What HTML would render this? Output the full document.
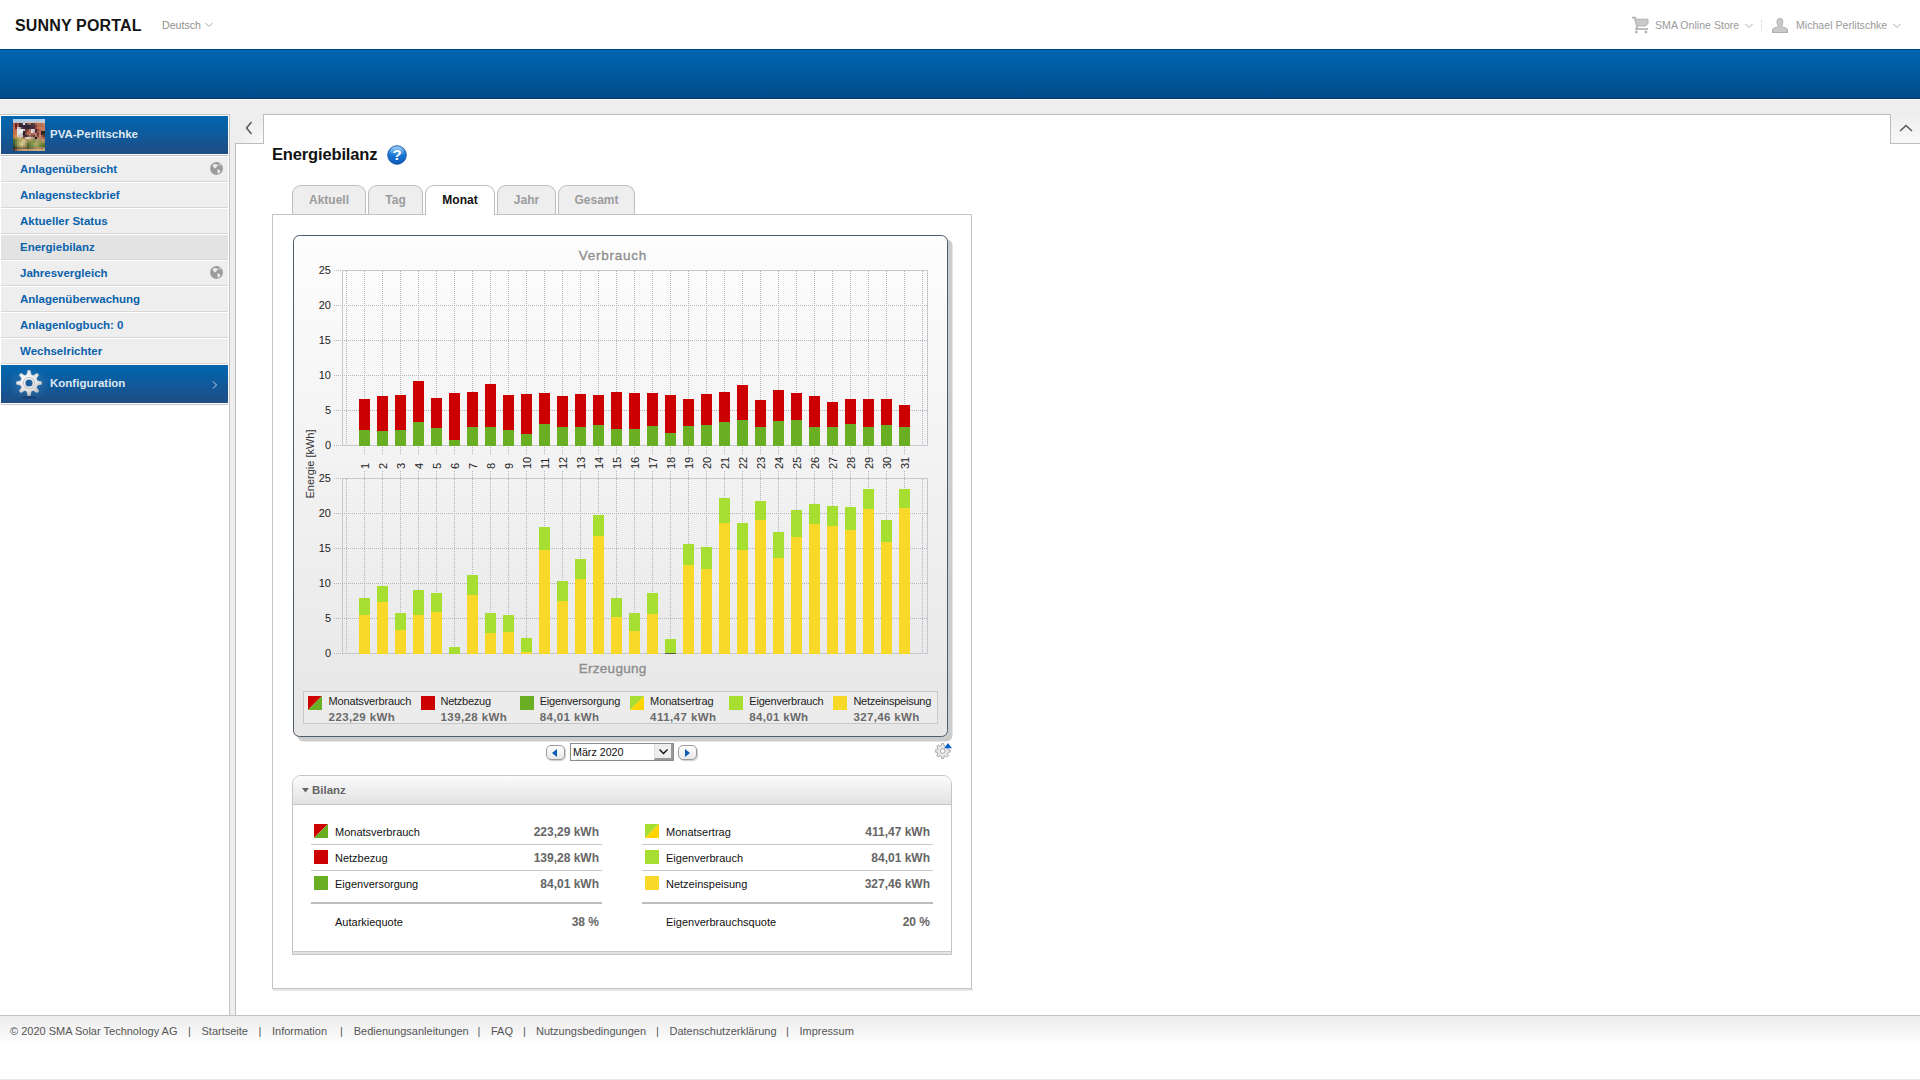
<!DOCTYPE html>
<html><head><meta charset="utf-8">
<style>
html,body{margin:0;padding:0;}
body{width:1920px;height:1080px;position:relative;overflow:hidden;background:#fff;font-family:"Liberation Sans", sans-serif;}
div,span{box-sizing:border-box;}
.abs{position:absolute;}
.mi{position:absolute;left:20px;font-size:11.5px;font-weight:bold;color:#0a62ab;line-height:14px;white-space:nowrap;}
.tab{position:absolute;top:185px;height:29px;border:1px solid #bdbdbd;border-bottom:none;border-radius:9px 9px 0 0;background:#eeeeee;font-size:12px;font-weight:bold;color:#9c9c9c;text-align:center;line-height:29px;}
.bt{position:absolute;font-size:11px;color:#111;line-height:14px;white-space:nowrap;}
.bv{position:absolute;width:150px;text-align:right;font-size:12px;font-weight:bold;color:#666;line-height:14px;white-space:nowrap;}
.ft{position:absolute;top:1024px;font-size:11px;color:#555;line-height:14px;white-space:nowrap;}
</style></head><body>
<!-- header -->
<div class="abs" style="left:15px;top:16px;font-size:16px;font-weight:bold;color:#151515;line-height:20px;letter-spacing:0.15px">SUNNY PORTAL</div>
<div class="abs" style="left:162px;top:18px;font-size:10.6px;color:#8f8f8f;line-height:14px">Deutsch</div>
<svg class="abs" style="left:205px;top:22px" width="8" height="6"><path d="M0.5 1 L4 4.5 L7.5 1" fill="none" stroke="#aaa" stroke-width="1"/></svg>
<!-- cart -->
<svg class="abs" style="left:1632px;top:16px" width="18" height="18" viewBox="0 0 18 18"><path d="M0 1.6 H3 L5.2 11.5 L3.8 13" fill="none" stroke="#b0b0b0" stroke-width="1.6"/><path d="M2.6 3.2 H16 V7.5 L13.6 10 H5 Z" fill="#c9c9c9" stroke="#b3b3b3" stroke-width="1"/><rect x="3.2" y="12.2" width="12.8" height="1.7" fill="#b3b3b3"/><circle cx="4.4" cy="16.1" r="1.3" fill="#aaa"/><circle cx="13.9" cy="16.1" r="1.3" fill="#aaa"/></svg>
<div class="abs" style="left:1655px;top:18px;font-size:10.6px;color:#9a9a9a;line-height:14px">SMA Online Store</div>
<svg class="abs" style="left:1745px;top:23px" width="8" height="6"><path d="M0.5 1 L4 4.5 L7.5 1" fill="none" stroke="#aaa" stroke-width="1"/></svg>
<div class="abs" style="left:1761px;top:20px;width:1px;height:11px;border-left:1px dotted #ccc"></div>
<svg class="abs" style="left:1772px;top:18px" width="16" height="15" viewBox="0 0 16 15"><path d="M0.5 14.5 V11.6 Q0.7 10.4 2.5 9.9 L4.5 9.4 Q6 8.9 6.3 8.1 Q5.1 7 5.1 4.6 V2.6 Q5.3 0.5 7.9 0.5 Q10.6 0.5 10.7 2.6 V4.6 Q10.7 7 9.6 8.1 Q9.9 8.9 11.5 9.4 L13.5 9.9 Q15.3 10.4 15.5 11.6 V14.5 Z" fill="#c9c9c9" stroke="#a8a8a8" stroke-width="0.9"/></svg>
<div class="abs" style="left:1796px;top:18px;font-size:10.6px;color:#9a9a9a;line-height:14px">Michael Perlitschke</div>
<svg class="abs" style="left:1893px;top:23px" width="8" height="6"><path d="M0.5 1 L4 4.5 L7.5 1" fill="none" stroke="#aaa" stroke-width="1"/></svg>

<!-- blue band -->
<div class="abs" style="left:0;top:49px;width:1920px;height:50px;background:linear-gradient(#0065af,#005a9f 45%,#004b88 100%);border-top:1px solid #00427c;border-bottom:1px solid #003a6e"></div>
<!-- gray page bg -->
<div class="abs" style="left:0;top:100px;width:1920px;height:915px;background:#eeeeee"></div>

<!-- sidebar -->
<div class="abs" style="left:0;top:114px;width:230px;height:901px;background:#fff;border-top:1px solid #c4c4c4;border-right:1px solid #c4c4c4"></div>
<div class="abs" style="left:1px;top:116px;width:227px;height:38px;background:linear-gradient(#0066b0,#1f4d85)"></div>
<!-- thumbnail -->
<svg class="abs" style="left:13px;top:119px" width="32" height="32" viewBox="0 0 32 32"><defs><filter id="tb" x="0" y="0" width="1" height="1"><feGaussianBlur stdDeviation="0.6"/></filter><clipPath id="tc"><rect width="32" height="32"/></clipPath></defs><g clip-path="url(#tc)"><rect width="32" height="32" fill="#9a7050"/><g filter="url(#tb)" shape-rendering="crispEdges"><rect x="0" y="0" width="2" height="2" fill="#a8d0f0"/><rect x="2" y="0" width="2" height="2" fill="#a8d0f0"/><rect x="4" y="0" width="2" height="2" fill="#a8d0f0"/><rect x="6" y="0" width="2" height="2" fill="#a8d0f0"/><rect x="8" y="0" width="2" height="2" fill="#a8d0f0"/><rect x="10" y="0" width="2" height="2" fill="#b0d4f0"/><rect x="12" y="0" width="2" height="2" fill="#b0d4f0"/><rect x="14" y="0" width="2" height="2" fill="#b0d4f0"/><rect x="16" y="0" width="2" height="2" fill="#a8d0f0"/><rect x="18" y="0" width="2" height="2" fill="#a8d0f0"/><rect x="20" y="0" width="2" height="2" fill="#a8d0f0"/><rect x="22" y="0" width="2" height="2" fill="#a8d0f0"/><rect x="24" y="0" width="2" height="2" fill="#a8d0f0"/><rect x="26" y="0" width="2" height="2" fill="#a8d0f0"/><rect x="28" y="0" width="2" height="2" fill="#b0d4f0"/><rect x="30" y="0" width="2" height="2" fill="#b0d4f0"/><rect x="0" y="2" width="2" height="2" fill="#c0c8d0"/><rect x="2" y="2" width="2" height="2" fill="#b8c0c8"/><rect x="4" y="2" width="2" height="2" fill="#c0c8d0"/><rect x="6" y="2" width="2" height="2" fill="#c0c0c8"/><rect x="8" y="2" width="2" height="2" fill="#c8c8d0"/><rect x="10" y="2" width="2" height="2" fill="#c0c0c8"/><rect x="12" y="2" width="2" height="2" fill="#c8c8d0"/><rect x="14" y="2" width="2" height="2" fill="#c8c8d0"/><rect x="16" y="2" width="2" height="2" fill="#c8c8d0"/><rect x="18" y="2" width="2" height="2" fill="#c0c8d0"/><rect x="20" y="2" width="2" height="2" fill="#c8c0c0"/><rect x="22" y="2" width="2" height="2" fill="#c8c0c0"/><rect x="24" y="2" width="2" height="2" fill="#c8c0c0"/><rect x="26" y="2" width="2" height="2" fill="#c8c8c8"/><rect x="28" y="2" width="2" height="2" fill="#c8c8c8"/><rect x="30" y="2" width="2" height="2" fill="#c8c8c8"/><rect x="0" y="4" width="2" height="2" fill="#c06040"/><rect x="2" y="4" width="2" height="2" fill="#5a3030"/><rect x="4" y="4" width="2" height="2" fill="#a05040"/><rect x="6" y="4" width="2" height="2" fill="#302830"/><rect x="8" y="4" width="2" height="2" fill="#404048"/><rect x="10" y="4" width="2" height="2" fill="#e0e0e8"/><rect x="12" y="4" width="2" height="2" fill="#503838"/><rect x="14" y="4" width="2" height="2" fill="#805048"/><rect x="16" y="4" width="2" height="2" fill="#a06050"/><rect x="18" y="4" width="2" height="2" fill="#503838"/><rect x="20" y="4" width="2" height="2" fill="#604040"/><rect x="22" y="4" width="2" height="2" fill="#a06048"/><rect x="24" y="4" width="2" height="2" fill="#c07050"/><rect x="26" y="4" width="2" height="2" fill="#c07050"/><rect x="28" y="4" width="2" height="2" fill="#c07858"/><rect x="30" y="4" width="2" height="2" fill="#c88060"/><rect x="0" y="6" width="2" height="2" fill="#c06040"/><rect x="2" y="6" width="2" height="2" fill="#5a2828"/><rect x="4" y="6" width="2" height="2" fill="#b85a40"/><rect x="6" y="6" width="2" height="2" fill="#302028"/><rect x="8" y="6" width="2" height="2" fill="#302030"/><rect x="10" y="6" width="2" height="2" fill="#302838"/><rect x="12" y="6" width="2" height="2" fill="#302838"/><rect x="14" y="6" width="2" height="2" fill="#202840"/><rect x="16" y="6" width="2" height="2" fill="#303040"/><rect x="18" y="6" width="2" height="2" fill="#403038"/><rect x="20" y="6" width="2" height="2" fill="#503838"/><rect x="22" y="6" width="2" height="2" fill="#704040"/><rect x="24" y="6" width="2" height="2" fill="#c07050"/><rect x="26" y="6" width="2" height="2" fill="#b07050"/><rect x="28" y="6" width="2" height="2" fill="#a07060"/><rect x="30" y="6" width="2" height="2" fill="#c08060"/><rect x="0" y="8" width="2" height="2" fill="#c86848"/><rect x="2" y="8" width="2" height="2" fill="#6a3030"/><rect x="4" y="8" width="2" height="2" fill="#d0c8c8"/><rect x="6" y="8" width="2" height="2" fill="#b8b0b0"/><rect x="8" y="8" width="2" height="2" fill="#503848"/><rect x="10" y="8" width="2" height="2" fill="#402838"/><rect x="12" y="8" width="2" height="2" fill="#302030"/><rect x="14" y="8" width="2" height="2" fill="#302838"/><rect x="16" y="8" width="2" height="2" fill="#402838"/><rect x="18" y="8" width="2" height="2" fill="#503040"/><rect x="20" y="8" width="2" height="2" fill="#402830"/><rect x="22" y="8" width="2" height="2" fill="#a05040"/><rect x="24" y="8" width="2" height="2" fill="#c87050"/><rect x="26" y="8" width="2" height="2" fill="#c87858"/><rect x="28" y="8" width="2" height="2" fill="#d08060"/><rect x="30" y="8" width="2" height="2" fill="#c87858"/><rect x="0" y="10" width="2" height="2" fill="#c86840"/><rect x="2" y="10" width="2" height="2" fill="#c06848"/><rect x="4" y="10" width="2" height="2" fill="#e8e8e8"/><rect x="6" y="10" width="2" height="2" fill="#e0e0e0"/><rect x="8" y="10" width="2" height="2" fill="#f0f0f0"/><rect x="10" y="10" width="2" height="2" fill="#d0c8c8"/><rect x="12" y="10" width="2" height="2" fill="#603830"/><rect x="14" y="10" width="2" height="2" fill="#804838"/><rect x="16" y="10" width="2" height="2" fill="#b07060"/><rect x="18" y="10" width="2" height="2" fill="#d8d0d0"/><rect x="20" y="10" width="2" height="2" fill="#d0c0c0"/><rect x="22" y="10" width="2" height="2" fill="#402830"/><rect x="24" y="10" width="2" height="2" fill="#904838"/><rect x="26" y="10" width="2" height="2" fill="#b06050"/><rect x="28" y="10" width="2" height="2" fill="#c07858"/><rect x="30" y="10" width="2" height="2" fill="#c08060"/><rect x="0" y="12" width="2" height="2" fill="#c86840"/><rect x="2" y="12" width="2" height="2" fill="#c87050"/><rect x="4" y="12" width="2" height="2" fill="#e0e0e8"/><rect x="6" y="12" width="2" height="2" fill="#f0f0f0"/><rect x="8" y="12" width="2" height="2" fill="#e8e8e8"/><rect x="10" y="12" width="2" height="2" fill="#302030"/><rect x="12" y="12" width="2" height="2" fill="#704038"/><rect x="14" y="12" width="2" height="2" fill="#a06048"/><rect x="16" y="12" width="2" height="2" fill="#c07058"/><rect x="18" y="12" width="2" height="2" fill="#e8e0e0"/><rect x="20" y="12" width="2" height="2" fill="#c0a0a0"/><rect x="22" y="12" width="2" height="2" fill="#503030"/><rect x="24" y="12" width="2" height="2" fill="#a05848"/><rect x="26" y="12" width="2" height="2" fill="#c07060"/><rect x="28" y="12" width="2" height="2" fill="#302020"/><rect x="30" y="12" width="2" height="2" fill="#202820"/><rect x="0" y="14" width="2" height="2" fill="#c07040"/><rect x="2" y="14" width="2" height="2" fill="#d08050"/><rect x="4" y="14" width="2" height="2" fill="#e0e0e0"/><rect x="6" y="14" width="2" height="2" fill="#d8d8e0"/><rect x="8" y="14" width="2" height="2" fill="#c0b8c0"/><rect x="10" y="14" width="2" height="2" fill="#201828"/><rect x="12" y="14" width="2" height="2" fill="#905040"/><rect x="14" y="14" width="2" height="2" fill="#b07058"/><rect x="16" y="14" width="2" height="2" fill="#c87860"/><rect x="18" y="14" width="2" height="2" fill="#a06050"/><rect x="20" y="14" width="2" height="2" fill="#b07060"/><rect x="22" y="14" width="2" height="2" fill="#c08070"/><rect x="24" y="14" width="2" height="2" fill="#603030"/><rect x="26" y="14" width="2" height="2" fill="#c07860"/><rect x="28" y="14" width="2" height="2" fill="#402020"/><rect x="30" y="14" width="2" height="2" fill="#304028"/><rect x="0" y="16" width="2" height="2" fill="#d07840"/><rect x="2" y="16" width="2" height="2" fill="#d88850"/><rect x="4" y="16" width="2" height="2" fill="#d8c8b0"/><rect x="6" y="16" width="2" height="2" fill="#c8c0c0"/><rect x="8" y="16" width="2" height="2" fill="#d0c8c8"/><rect x="10" y="16" width="2" height="2" fill="#503038"/><rect x="12" y="16" width="2" height="2" fill="#402830"/><rect x="14" y="16" width="2" height="2" fill="#705050"/><rect x="16" y="16" width="2" height="2" fill="#907060"/><rect x="18" y="16" width="2" height="2" fill="#805848"/><rect x="20" y="16" width="2" height="2" fill="#604038"/><rect x="22" y="16" width="2" height="2" fill="#b07060"/><rect x="24" y="16" width="2" height="2" fill="#805040"/><rect x="26" y="16" width="2" height="2" fill="#c08070"/><rect x="28" y="16" width="2" height="2" fill="#a06050"/><rect x="30" y="16" width="2" height="2" fill="#603838"/><rect x="0" y="18" width="2" height="2" fill="#a08040"/><rect x="2" y="18" width="2" height="2" fill="#b09050"/><rect x="4" y="18" width="2" height="2" fill="#c0a060"/><rect x="6" y="18" width="2" height="2" fill="#d0b880"/><rect x="8" y="18" width="2" height="2" fill="#b09860"/><rect x="10" y="18" width="2" height="2" fill="#907050"/><rect x="12" y="18" width="2" height="2" fill="#c8b8a0"/><rect x="14" y="18" width="2" height="2" fill="#e0d8c8"/><rect x="16" y="18" width="2" height="2" fill="#d0c0b0"/><rect x="18" y="18" width="2" height="2" fill="#c0a890"/><rect x="20" y="18" width="2" height="2" fill="#a08870"/><rect x="22" y="18" width="2" height="2" fill="#201818"/><rect x="24" y="18" width="2" height="2" fill="#b08060"/><rect x="26" y="18" width="2" height="2" fill="#c08870"/><rect x="28" y="18" width="2" height="2" fill="#b07050"/><rect x="30" y="18" width="2" height="2" fill="#a06850"/><rect x="0" y="20" width="2" height="2" fill="#506838"/><rect x="2" y="20" width="2" height="2" fill="#708040"/><rect x="4" y="20" width="2" height="2" fill="#909850"/><rect x="6" y="20" width="2" height="2" fill="#a0a060"/><rect x="8" y="20" width="2" height="2" fill="#c0b070"/><rect x="10" y="20" width="2" height="2" fill="#d0b880"/><rect x="12" y="20" width="2" height="2" fill="#b0a070"/><rect x="14" y="20" width="2" height="2" fill="#a09060"/><rect x="16" y="20" width="2" height="2" fill="#c0a070"/><rect x="18" y="20" width="2" height="2" fill="#a09060"/><rect x="20" y="20" width="2" height="2" fill="#809050"/><rect x="22" y="20" width="2" height="2" fill="#a09868"/><rect x="24" y="20" width="2" height="2" fill="#b09870"/><rect x="26" y="20" width="2" height="2" fill="#a08860"/><rect x="28" y="20" width="2" height="2" fill="#c09068"/><rect x="30" y="20" width="2" height="2" fill="#c08868"/><rect x="0" y="22" width="2" height="2" fill="#406030"/><rect x="2" y="22" width="2" height="2" fill="#608040"/><rect x="4" y="22" width="2" height="2" fill="#a0a060"/><rect x="6" y="22" width="2" height="2" fill="#b0a868"/><rect x="8" y="22" width="2" height="2" fill="#c8c080"/><rect x="10" y="22" width="2" height="2" fill="#d0c090"/><rect x="12" y="22" width="2" height="2" fill="#b0a070"/><rect x="14" y="22" width="2" height="2" fill="#90904a"/><rect x="16" y="22" width="2" height="2" fill="#808840"/><rect x="18" y="22" width="2" height="2" fill="#909050"/><rect x="20" y="22" width="2" height="2" fill="#80904a"/><rect x="22" y="22" width="2" height="2" fill="#a0a060"/><rect x="24" y="22" width="2" height="2" fill="#a09860"/><rect x="26" y="22" width="2" height="2" fill="#909850"/><rect x="28" y="22" width="2" height="2" fill="#a09050"/><rect x="30" y="22" width="2" height="2" fill="#a09060"/><rect x="0" y="24" width="2" height="2" fill="#405830"/><rect x="2" y="24" width="2" height="2" fill="#708040"/><rect x="4" y="24" width="2" height="2" fill="#a09858"/><rect x="6" y="24" width="2" height="2" fill="#c0b880"/><rect x="8" y="24" width="2" height="2" fill="#d8d0a0"/><rect x="10" y="24" width="2" height="2" fill="#c0b080"/><rect x="12" y="24" width="2" height="2" fill="#a09060"/><rect x="14" y="24" width="2" height="2" fill="#606838"/><rect x="16" y="24" width="2" height="2" fill="#708040"/><rect x="18" y="24" width="2" height="2" fill="#809050"/><rect x="20" y="24" width="2" height="2" fill="#a0a060"/><rect x="22" y="24" width="2" height="2" fill="#b0a870"/><rect x="24" y="24" width="2" height="2" fill="#a0a060"/><rect x="26" y="24" width="2" height="2" fill="#809048"/><rect x="28" y="24" width="2" height="2" fill="#708838"/><rect x="30" y="24" width="2" height="2" fill="#608030"/><rect x="0" y="26" width="2" height="2" fill="#304828"/><rect x="2" y="26" width="2" height="2" fill="#607040"/><rect x="4" y="26" width="2" height="2" fill="#909050"/><rect x="6" y="26" width="2" height="2" fill="#b0a068"/><rect x="8" y="26" width="2" height="2" fill="#c0b078"/><rect x="10" y="26" width="2" height="2" fill="#b0a070"/><rect x="12" y="26" width="2" height="2" fill="#908858"/><rect x="14" y="26" width="2" height="2" fill="#506030"/><rect x="16" y="26" width="2" height="2" fill="#608038"/><rect x="18" y="26" width="2" height="2" fill="#708848"/><rect x="20" y="26" width="2" height="2" fill="#909858"/><rect x="22" y="26" width="2" height="2" fill="#a0a060"/><rect x="24" y="26" width="2" height="2" fill="#90984a"/><rect x="26" y="26" width="2" height="2" fill="#708838"/><rect x="28" y="26" width="2" height="2" fill="#607838"/><rect x="30" y="26" width="2" height="2" fill="#587030"/><rect x="0" y="28" width="2" height="2" fill="#403828"/><rect x="2" y="28" width="2" height="2" fill="#504030"/><rect x="4" y="28" width="2" height="2" fill="#706040"/><rect x="6" y="28" width="2" height="2" fill="#807048"/><rect x="8" y="28" width="2" height="2" fill="#907050"/><rect x="10" y="28" width="2" height="2" fill="#806848"/><rect x="12" y="28" width="2" height="2" fill="#706040"/><rect x="14" y="28" width="2" height="2" fill="#605838"/><rect x="16" y="28" width="2" height="2" fill="#706840"/><rect x="18" y="28" width="2" height="2" fill="#807048"/><rect x="20" y="28" width="2" height="2" fill="#908050"/><rect x="22" y="28" width="2" height="2" fill="#a08858"/><rect x="24" y="28" width="2" height="2" fill="#b09060"/><rect x="26" y="28" width="2" height="2" fill="#a08860"/><rect x="28" y="28" width="2" height="2" fill="#988058"/><rect x="30" y="28" width="2" height="2" fill="#a08860"/><rect x="0" y="30" width="2" height="2" fill="#503830"/><rect x="2" y="30" width="2" height="2" fill="#806048"/><rect x="4" y="30" width="2" height="2" fill="#a08060"/><rect x="6" y="30" width="2" height="2" fill="#b09068"/><rect x="8" y="30" width="2" height="2" fill="#c09870"/><rect x="10" y="30" width="2" height="2" fill="#c8a078"/><rect x="12" y="30" width="2" height="2" fill="#c0a070"/><rect x="14" y="30" width="2" height="2" fill="#b89868"/><rect x="16" y="30" width="2" height="2" fill="#c0a070"/><rect x="18" y="30" width="2" height="2" fill="#c8a878"/><rect x="20" y="30" width="2" height="2" fill="#c8a878"/><rect x="22" y="30" width="2" height="2" fill="#d0a878"/><rect x="24" y="30" width="2" height="2" fill="#d0b080"/><rect x="26" y="30" width="2" height="2" fill="#d0a878"/><rect x="28" y="30" width="2" height="2" fill="#c8a070"/><rect x="30" y="30" width="2" height="2" fill="#d0a878"/></g></g></svg>
<div class="abs" style="left:50px;top:127px;font-size:11.5px;font-weight:bold;color:#dfe8f2;line-height:14px">PVA-Perlitschke</div>
<div class="abs" style="left:1px;top:155px;width:227px;height:1px;background:#bdbdbd"></div>
<div style="position:absolute;left:1px;top:157px;width:227px;height:24px;background:#eeeeee"></div>
<div style="position:absolute;left:1px;top:181px;width:227px;height:1px;background:#d6d6d6"></div>
<div class="mi" style="top:162px">Anlagenübersicht</div>
<svg style="position:absolute;left:210px;top:162px" width="14" height="14" viewBox="0 0 14 14"><circle cx="6.5" cy="6.5" r="6.5" fill="#9c9c9c"/><path d="M2.6 3.2 L4.8 2 L7.6 2.4 L7.8 3.6 L5.2 6.6 L3.6 5.4 Z" fill="#ececec"/><path d="M9 1.8 L10.6 2.6 L10.2 3.6 L9 3.2 Z" fill="#ececec"/><path d="M7 8 L8.6 7.4 L10.4 8.8 L9.6 10.8 L7.8 12 L7.6 9.8 Z" fill="#ececec"/></svg>
<div style="position:absolute;left:1px;top:183px;width:227px;height:24px;background:#eeeeee"></div>
<div style="position:absolute;left:1px;top:207px;width:227px;height:1px;background:#d6d6d6"></div>
<div class="mi" style="top:188px">Anlagensteckbrief</div>
<div style="position:absolute;left:1px;top:209px;width:227px;height:24px;background:#eeeeee"></div>
<div style="position:absolute;left:1px;top:233px;width:227px;height:1px;background:#d6d6d6"></div>
<div class="mi" style="top:214px">Aktueller Status</div>
<div style="position:absolute;left:1px;top:235px;width:227px;height:24px;background:#e3e3e3"></div>
<div style="position:absolute;left:1px;top:259px;width:227px;height:1px;background:#d6d6d6"></div>
<div class="mi" style="top:240px">Energiebilanz</div>
<div style="position:absolute;left:1px;top:261px;width:227px;height:24px;background:#eeeeee"></div>
<div style="position:absolute;left:1px;top:285px;width:227px;height:1px;background:#d6d6d6"></div>
<div class="mi" style="top:266px">Jahresvergleich</div>
<svg style="position:absolute;left:210px;top:266px" width="14" height="14" viewBox="0 0 14 14"><circle cx="6.5" cy="6.5" r="6.5" fill="#9c9c9c"/><path d="M2.6 3.2 L4.8 2 L7.6 2.4 L7.8 3.6 L5.2 6.6 L3.6 5.4 Z" fill="#ececec"/><path d="M9 1.8 L10.6 2.6 L10.2 3.6 L9 3.2 Z" fill="#ececec"/><path d="M7 8 L8.6 7.4 L10.4 8.8 L9.6 10.8 L7.8 12 L7.6 9.8 Z" fill="#ececec"/></svg>
<div style="position:absolute;left:1px;top:287px;width:227px;height:24px;background:#eeeeee"></div>
<div style="position:absolute;left:1px;top:311px;width:227px;height:1px;background:#d6d6d6"></div>
<div class="mi" style="top:292px">Anlagenüberwachung</div>
<div style="position:absolute;left:1px;top:313px;width:227px;height:24px;background:#eeeeee"></div>
<div style="position:absolute;left:1px;top:337px;width:227px;height:1px;background:#d6d6d6"></div>
<div class="mi" style="top:318px">Anlagenlogbuch: 0</div>
<div style="position:absolute;left:1px;top:339px;width:227px;height:24px;background:#eeeeee"></div>
<div style="position:absolute;left:1px;top:363px;width:227px;height:1px;background:#d6d6d6"></div>
<div class="mi" style="top:344px">Wechselrichter</div>
<div class="abs" style="left:1px;top:365px;width:227px;height:38px;background:linear-gradient(#0066b0,#1f4d85)"></div>
<div class="abs" style="left:1px;top:404px;width:227px;height:1px;background:#c8c8c8"></div>
<div class="abs" style="left:6px;top:366px;width:46px;height:36px;background:radial-gradient(ellipse at 50% 50%,rgba(120,170,220,0.35) 0,rgba(120,170,220,0) 65%)"></div>
<svg class="abs" style="left:16px;top:370px" width="26" height="30" viewBox="0 0 26 30"><defs><radialGradient id="gg" cx="0.4" cy="0.35" r="0.7"><stop offset="0" stop-color="#ffffff"/><stop offset="0.6" stop-color="#e6e6e6"/><stop offset="1" stop-color="#bdbdbd"/></radialGradient></defs><ellipse cx="13" cy="27.5" rx="8" ry="1.6" fill="#0e2f5c" opacity="0.45"/><path d="M10.86 4.67 L11.81 0.46 L14.19 0.46 L15.14 4.67 L17.38 5.60 L21.03 3.29 L22.71 4.97 L20.40 8.62 L21.33 10.86 L25.54 11.81 L25.54 14.19 L21.33 15.14 L20.40 17.38 L22.71 21.03 L21.03 22.71 L17.38 20.40 L15.14 21.33 L14.19 25.54 L11.81 25.54 L10.86 21.33 L8.62 20.40 L4.97 22.71 L3.29 21.03 L5.60 17.38 L4.67 15.14 L0.46 14.19 L0.46 11.81 L4.67 10.86 L5.60 8.62 L3.29 4.97 L4.97 3.29 L8.62 5.60 Z" fill="url(#gg)" stroke="#d0d0d0" stroke-width="0.6" stroke-linejoin="round"/><circle cx="13" cy="13" r="5.6" fill="none" stroke="#c8c8c8" stroke-width="1.2"/><circle cx="13" cy="13" r="3.6" fill="#1b5c9e"/></svg>
<div class="abs" style="left:50px;top:376px;font-size:11.5px;font-weight:bold;color:#dfe8f2;line-height:14px">Konfiguration</div>
<svg class="abs" style="left:212px;top:381px" width="6" height="8"><path d="M1 0.5 L4.5 4 L1 7.5" fill="none" stroke="#c8d4e4" stroke-width="1"/></svg>

<!-- content frame -->
<div class="abs" style="left:235px;top:143px;width:1685px;height:872px;background:#fff;border-left:1px solid #bdbdbd;border-top:1px solid #bdbdbd"></div>
<div class="abs" style="left:263px;top:114px;width:1628px;height:30px;background:#fff;border-left:1px solid #bdbdbd;border-top:1px solid #bdbdbd;border-right:1px solid #bdbdbd"></div>
<div class="abs" style="left:264px;top:143px;width:1626px;height:1px;background:#fff"></div>
<div class="abs" style="left:236px;top:114px;width:27px;height:29px;background:radial-gradient(circle at 100% 100%,#fafafa 0,#eeeeee 60%)"></div>
<div class="abs" style="left:1891px;top:114px;width:29px;height:29px;background:linear-gradient(#eeeeee,#f8f8f8)"></div>
<svg class="abs" style="left:244px;top:121px" width="10" height="14"><path d="M7.5 1 L2.5 7 L7.5 13" fill="none" stroke="#555" stroke-width="1.5"/></svg>
<svg class="abs" style="left:1899px;top:123px" width="14" height="10"><path d="M1 8 L7 2.5 L13 8" fill="none" stroke="#555" stroke-width="1.5"/></svg>

<!-- title -->
<div class="abs" style="left:272px;top:144px;font-size:16.5px;font-weight:bold;color:#111;line-height:20px;letter-spacing:-0.15px">Energiebilanz</div>
<svg class="abs" style="left:387px;top:145px" width="20" height="20" viewBox="0 0 20 20"><defs><linearGradient id="hg" x1="0" y1="0" x2="0" y2="1"><stop offset="0" stop-color="#5fb0f0"/><stop offset="0.5" stop-color="#1a78d6"/><stop offset="1" stop-color="#0a58b8"/></linearGradient><linearGradient id="hh" x1="0" y1="0" x2="0" y2="1"><stop offset="0" stop-color="#fff" stop-opacity="0.4"/><stop offset="1" stop-color="#fff" stop-opacity="0"/></linearGradient></defs><circle cx="10" cy="10" r="9.3" fill="url(#hg)" stroke="#15549e" stroke-width="0.9"/><ellipse cx="10" cy="6.2" rx="6.8" ry="4.6" fill="url(#hh)"/><text x="10" y="15.4" font-size="15" font-weight="bold" fill="#fff" text-anchor="middle" font-family='"Liberation Sans", sans-serif'>?</text></svg>

<!-- tab content box -->
<div class="abs" style="left:272px;top:214px;width:700px;height:775px;border:1px solid #c4c4c4;background:#fff"></div>
<div class="abs" style="left:273px;top:989px;width:700px;height:2px;background:#e6e6e6"></div>
<div class="tab" style="left:292px;width:74px">Aktuell</div>
<div class="tab" style="left:368px;width:55px">Tag</div>
<div class="tab" style="left:425px;width:70px;height:30px;background:#fff;color:#111">Monat</div>
<div class="tab" style="left:497px;width:59px">Jahr</div>
<div class="tab" style="left:558px;width:77px">Gesamt</div>

<svg style="position:absolute;left:290px;top:230px" width="670" height="520" viewBox="290 230 670 520" font-family='"Liberation Sans", sans-serif'>
<defs><linearGradient id="cbg" x1="0" y1="0" x2="0" y2="1"><stop offset="0" stop-color="#fdfdfd"/><stop offset="1" stop-color="#e6e6e6"/></linearGradient></defs>
<rect x="297.5" y="239.5" width="655" height="502" rx="6" fill="#cccccc"/>
<rect x="293.5" y="235.5" width="654" height="501" rx="6" fill="url(#cbg)" stroke="#4d5b67" stroke-width="1"/>
<rect x="342.5" y="270.5" width="585" height="175" fill="none" stroke="#c3c9cf" stroke-width="1"/>
<line x1="334" y1="445.5" x2="342" y2="445.5" stroke="#b0b5ba" stroke-width="1" stroke-dasharray="1 1"/>
<line x1="334" y1="410.5" x2="927" y2="410.5" stroke="#b0b5ba" stroke-width="1" stroke-dasharray="1 1"/>
<line x1="334" y1="375.5" x2="927" y2="375.5" stroke="#b0b5ba" stroke-width="1" stroke-dasharray="1 1"/>
<line x1="334" y1="340.5" x2="927" y2="340.5" stroke="#b0b5ba" stroke-width="1" stroke-dasharray="1 1"/>
<line x1="334" y1="305.5" x2="927" y2="305.5" stroke="#b0b5ba" stroke-width="1" stroke-dasharray="1 1"/>
<line x1="334" y1="270.5" x2="342" y2="270.5" stroke="#b0b5ba" stroke-width="1" stroke-dasharray="1 1"/>
<line x1="346.5" y1="271" x2="346.5" y2="445" stroke="#b0b5ba" stroke-width="1" stroke-dasharray="1 1"/>
<line x1="364.5" y1="271" x2="364.5" y2="454" stroke="#b0b5ba" stroke-width="1" stroke-dasharray="1 1"/>
<line x1="382.5" y1="271" x2="382.5" y2="454" stroke="#b0b5ba" stroke-width="1" stroke-dasharray="1 1"/>
<line x1="400.5" y1="271" x2="400.5" y2="454" stroke="#b0b5ba" stroke-width="1" stroke-dasharray="1 1"/>
<line x1="418.5" y1="271" x2="418.5" y2="454" stroke="#b0b5ba" stroke-width="1" stroke-dasharray="1 1"/>
<line x1="436.5" y1="271" x2="436.5" y2="454" stroke="#b0b5ba" stroke-width="1" stroke-dasharray="1 1"/>
<line x1="454.5" y1="271" x2="454.5" y2="454" stroke="#b0b5ba" stroke-width="1" stroke-dasharray="1 1"/>
<line x1="472.5" y1="271" x2="472.5" y2="454" stroke="#b0b5ba" stroke-width="1" stroke-dasharray="1 1"/>
<line x1="490.5" y1="271" x2="490.5" y2="454" stroke="#b0b5ba" stroke-width="1" stroke-dasharray="1 1"/>
<line x1="508.5" y1="271" x2="508.5" y2="454" stroke="#b0b5ba" stroke-width="1" stroke-dasharray="1 1"/>
<line x1="526.5" y1="271" x2="526.5" y2="454" stroke="#b0b5ba" stroke-width="1" stroke-dasharray="1 1"/>
<line x1="544.5" y1="271" x2="544.5" y2="454" stroke="#b0b5ba" stroke-width="1" stroke-dasharray="1 1"/>
<line x1="562.5" y1="271" x2="562.5" y2="454" stroke="#b0b5ba" stroke-width="1" stroke-dasharray="1 1"/>
<line x1="580.5" y1="271" x2="580.5" y2="454" stroke="#b0b5ba" stroke-width="1" stroke-dasharray="1 1"/>
<line x1="598.5" y1="271" x2="598.5" y2="454" stroke="#b0b5ba" stroke-width="1" stroke-dasharray="1 1"/>
<line x1="616.5" y1="271" x2="616.5" y2="454" stroke="#b0b5ba" stroke-width="1" stroke-dasharray="1 1"/>
<line x1="634.5" y1="271" x2="634.5" y2="454" stroke="#b0b5ba" stroke-width="1" stroke-dasharray="1 1"/>
<line x1="652.5" y1="271" x2="652.5" y2="454" stroke="#b0b5ba" stroke-width="1" stroke-dasharray="1 1"/>
<line x1="670.5" y1="271" x2="670.5" y2="454" stroke="#b0b5ba" stroke-width="1" stroke-dasharray="1 1"/>
<line x1="688.5" y1="271" x2="688.5" y2="454" stroke="#b0b5ba" stroke-width="1" stroke-dasharray="1 1"/>
<line x1="706.5" y1="271" x2="706.5" y2="454" stroke="#b0b5ba" stroke-width="1" stroke-dasharray="1 1"/>
<line x1="724.5" y1="271" x2="724.5" y2="454" stroke="#b0b5ba" stroke-width="1" stroke-dasharray="1 1"/>
<line x1="742.5" y1="271" x2="742.5" y2="454" stroke="#b0b5ba" stroke-width="1" stroke-dasharray="1 1"/>
<line x1="760.5" y1="271" x2="760.5" y2="454" stroke="#b0b5ba" stroke-width="1" stroke-dasharray="1 1"/>
<line x1="778.5" y1="271" x2="778.5" y2="454" stroke="#b0b5ba" stroke-width="1" stroke-dasharray="1 1"/>
<line x1="796.5" y1="271" x2="796.5" y2="454" stroke="#b0b5ba" stroke-width="1" stroke-dasharray="1 1"/>
<line x1="814.5" y1="271" x2="814.5" y2="454" stroke="#b0b5ba" stroke-width="1" stroke-dasharray="1 1"/>
<line x1="832.5" y1="271" x2="832.5" y2="454" stroke="#b0b5ba" stroke-width="1" stroke-dasharray="1 1"/>
<line x1="850.5" y1="271" x2="850.5" y2="454" stroke="#b0b5ba" stroke-width="1" stroke-dasharray="1 1"/>
<line x1="868.5" y1="271" x2="868.5" y2="454" stroke="#b0b5ba" stroke-width="1" stroke-dasharray="1 1"/>
<line x1="886.5" y1="271" x2="886.5" y2="454" stroke="#b0b5ba" stroke-width="1" stroke-dasharray="1 1"/>
<line x1="904.5" y1="271" x2="904.5" y2="454" stroke="#b0b5ba" stroke-width="1" stroke-dasharray="1 1"/>
<line x1="922.5" y1="271" x2="922.5" y2="445" stroke="#b0b5ba" stroke-width="1" stroke-dasharray="1 1"/>
<text x="331" y="449" font-size="11" text-anchor="end" fill="#222">0</text>
<text x="331" y="414" font-size="11" text-anchor="end" fill="#222">5</text>
<text x="331" y="379" font-size="11" text-anchor="end" fill="#222">10</text>
<text x="331" y="344" font-size="11" text-anchor="end" fill="#222">15</text>
<text x="331" y="309" font-size="11" text-anchor="end" fill="#222">20</text>
<text x="331" y="274" font-size="11" text-anchor="end" fill="#222">25</text>
<rect x="342.5" y="478.5" width="585" height="175" fill="none" stroke="#c3c9cf" stroke-width="1"/>
<line x1="334" y1="653.5" x2="342" y2="653.5" stroke="#b0b5ba" stroke-width="1" stroke-dasharray="1 1"/>
<line x1="334" y1="618.5" x2="927" y2="618.5" stroke="#b0b5ba" stroke-width="1" stroke-dasharray="1 1"/>
<line x1="334" y1="583.5" x2="927" y2="583.5" stroke="#b0b5ba" stroke-width="1" stroke-dasharray="1 1"/>
<line x1="334" y1="548.5" x2="927" y2="548.5" stroke="#b0b5ba" stroke-width="1" stroke-dasharray="1 1"/>
<line x1="334" y1="513.5" x2="927" y2="513.5" stroke="#b0b5ba" stroke-width="1" stroke-dasharray="1 1"/>
<line x1="334" y1="478.5" x2="342" y2="478.5" stroke="#b0b5ba" stroke-width="1" stroke-dasharray="1 1"/>
<line x1="346.5" y1="479" x2="346.5" y2="653" stroke="#b0b5ba" stroke-width="1" stroke-dasharray="1 1"/>
<line x1="364.5" y1="471" x2="364.5" y2="653" stroke="#b0b5ba" stroke-width="1" stroke-dasharray="1 1"/>
<line x1="382.5" y1="471" x2="382.5" y2="653" stroke="#b0b5ba" stroke-width="1" stroke-dasharray="1 1"/>
<line x1="400.5" y1="471" x2="400.5" y2="653" stroke="#b0b5ba" stroke-width="1" stroke-dasharray="1 1"/>
<line x1="418.5" y1="471" x2="418.5" y2="653" stroke="#b0b5ba" stroke-width="1" stroke-dasharray="1 1"/>
<line x1="436.5" y1="471" x2="436.5" y2="653" stroke="#b0b5ba" stroke-width="1" stroke-dasharray="1 1"/>
<line x1="454.5" y1="471" x2="454.5" y2="653" stroke="#b0b5ba" stroke-width="1" stroke-dasharray="1 1"/>
<line x1="472.5" y1="471" x2="472.5" y2="653" stroke="#b0b5ba" stroke-width="1" stroke-dasharray="1 1"/>
<line x1="490.5" y1="471" x2="490.5" y2="653" stroke="#b0b5ba" stroke-width="1" stroke-dasharray="1 1"/>
<line x1="508.5" y1="471" x2="508.5" y2="653" stroke="#b0b5ba" stroke-width="1" stroke-dasharray="1 1"/>
<line x1="526.5" y1="471" x2="526.5" y2="653" stroke="#b0b5ba" stroke-width="1" stroke-dasharray="1 1"/>
<line x1="544.5" y1="471" x2="544.5" y2="653" stroke="#b0b5ba" stroke-width="1" stroke-dasharray="1 1"/>
<line x1="562.5" y1="471" x2="562.5" y2="653" stroke="#b0b5ba" stroke-width="1" stroke-dasharray="1 1"/>
<line x1="580.5" y1="471" x2="580.5" y2="653" stroke="#b0b5ba" stroke-width="1" stroke-dasharray="1 1"/>
<line x1="598.5" y1="471" x2="598.5" y2="653" stroke="#b0b5ba" stroke-width="1" stroke-dasharray="1 1"/>
<line x1="616.5" y1="471" x2="616.5" y2="653" stroke="#b0b5ba" stroke-width="1" stroke-dasharray="1 1"/>
<line x1="634.5" y1="471" x2="634.5" y2="653" stroke="#b0b5ba" stroke-width="1" stroke-dasharray="1 1"/>
<line x1="652.5" y1="471" x2="652.5" y2="653" stroke="#b0b5ba" stroke-width="1" stroke-dasharray="1 1"/>
<line x1="670.5" y1="471" x2="670.5" y2="653" stroke="#b0b5ba" stroke-width="1" stroke-dasharray="1 1"/>
<line x1="688.5" y1="471" x2="688.5" y2="653" stroke="#b0b5ba" stroke-width="1" stroke-dasharray="1 1"/>
<line x1="706.5" y1="471" x2="706.5" y2="653" stroke="#b0b5ba" stroke-width="1" stroke-dasharray="1 1"/>
<line x1="724.5" y1="471" x2="724.5" y2="653" stroke="#b0b5ba" stroke-width="1" stroke-dasharray="1 1"/>
<line x1="742.5" y1="471" x2="742.5" y2="653" stroke="#b0b5ba" stroke-width="1" stroke-dasharray="1 1"/>
<line x1="760.5" y1="471" x2="760.5" y2="653" stroke="#b0b5ba" stroke-width="1" stroke-dasharray="1 1"/>
<line x1="778.5" y1="471" x2="778.5" y2="653" stroke="#b0b5ba" stroke-width="1" stroke-dasharray="1 1"/>
<line x1="796.5" y1="471" x2="796.5" y2="653" stroke="#b0b5ba" stroke-width="1" stroke-dasharray="1 1"/>
<line x1="814.5" y1="471" x2="814.5" y2="653" stroke="#b0b5ba" stroke-width="1" stroke-dasharray="1 1"/>
<line x1="832.5" y1="471" x2="832.5" y2="653" stroke="#b0b5ba" stroke-width="1" stroke-dasharray="1 1"/>
<line x1="850.5" y1="471" x2="850.5" y2="653" stroke="#b0b5ba" stroke-width="1" stroke-dasharray="1 1"/>
<line x1="868.5" y1="471" x2="868.5" y2="653" stroke="#b0b5ba" stroke-width="1" stroke-dasharray="1 1"/>
<line x1="886.5" y1="471" x2="886.5" y2="653" stroke="#b0b5ba" stroke-width="1" stroke-dasharray="1 1"/>
<line x1="904.5" y1="471" x2="904.5" y2="653" stroke="#b0b5ba" stroke-width="1" stroke-dasharray="1 1"/>
<line x1="922.5" y1="479" x2="922.5" y2="653" stroke="#b0b5ba" stroke-width="1" stroke-dasharray="1 1"/>
<text x="331" y="657" font-size="11" text-anchor="end" fill="#222">0</text>
<text x="331" y="622" font-size="11" text-anchor="end" fill="#222">5</text>
<text x="331" y="587" font-size="11" text-anchor="end" fill="#222">10</text>
<text x="331" y="552" font-size="11" text-anchor="end" fill="#222">15</text>
<text x="331" y="517" font-size="11" text-anchor="end" fill="#222">20</text>
<text x="331" y="482" font-size="11" text-anchor="end" fill="#222">25</text>
<rect x="359" y="399" width="11" height="31" fill="#cc0000"/>
<rect x="359" y="430" width="11" height="16" fill="#6aae24"/>
<rect x="377" y="396" width="11" height="35" fill="#cc0000"/>
<rect x="377" y="431" width="11" height="15" fill="#6aae24"/>
<rect x="395" y="395" width="11" height="35" fill="#cc0000"/>
<rect x="395" y="430" width="11" height="16" fill="#6aae24"/>
<rect x="413" y="381" width="11" height="41" fill="#cc0000"/>
<rect x="413" y="422" width="11" height="24" fill="#6aae24"/>
<rect x="431" y="398" width="11" height="30" fill="#cc0000"/>
<rect x="431" y="428" width="11" height="18" fill="#6aae24"/>
<rect x="449" y="393" width="11" height="47" fill="#cc0000"/>
<rect x="449" y="440" width="11" height="6" fill="#6aae24"/>
<rect x="467" y="392" width="11" height="35" fill="#cc0000"/>
<rect x="467" y="427" width="11" height="19" fill="#6aae24"/>
<rect x="485" y="384" width="11" height="43" fill="#cc0000"/>
<rect x="485" y="427" width="11" height="19" fill="#6aae24"/>
<rect x="503" y="395" width="11" height="35" fill="#cc0000"/>
<rect x="503" y="430" width="11" height="16" fill="#6aae24"/>
<rect x="521" y="394" width="11" height="40" fill="#cc0000"/>
<rect x="521" y="434" width="11" height="12" fill="#6aae24"/>
<rect x="539" y="393" width="11" height="31" fill="#cc0000"/>
<rect x="539" y="424" width="11" height="22" fill="#6aae24"/>
<rect x="557" y="396" width="11" height="31" fill="#cc0000"/>
<rect x="557" y="427" width="11" height="19" fill="#6aae24"/>
<rect x="575" y="394" width="11" height="33" fill="#cc0000"/>
<rect x="575" y="427" width="11" height="19" fill="#6aae24"/>
<rect x="593" y="395" width="11" height="30" fill="#cc0000"/>
<rect x="593" y="425" width="11" height="21" fill="#6aae24"/>
<rect x="611" y="392" width="11" height="37" fill="#cc0000"/>
<rect x="611" y="429" width="11" height="17" fill="#6aae24"/>
<rect x="629" y="393" width="11" height="36" fill="#cc0000"/>
<rect x="629" y="429" width="11" height="17" fill="#6aae24"/>
<rect x="647" y="393" width="11" height="33" fill="#cc0000"/>
<rect x="647" y="426" width="11" height="20" fill="#6aae24"/>
<rect x="665" y="395" width="11" height="38" fill="#cc0000"/>
<rect x="665" y="433" width="11" height="13" fill="#6aae24"/>
<rect x="683" y="399" width="11" height="27" fill="#cc0000"/>
<rect x="683" y="426" width="11" height="20" fill="#6aae24"/>
<rect x="701" y="394" width="11" height="31" fill="#cc0000"/>
<rect x="701" y="425" width="11" height="21" fill="#6aae24"/>
<rect x="719" y="392" width="11" height="30" fill="#cc0000"/>
<rect x="719" y="422" width="11" height="24" fill="#6aae24"/>
<rect x="737" y="385" width="11" height="35" fill="#cc0000"/>
<rect x="737" y="420" width="11" height="26" fill="#6aae24"/>
<rect x="755" y="400" width="11" height="27" fill="#cc0000"/>
<rect x="755" y="427" width="11" height="19" fill="#6aae24"/>
<rect x="773" y="390" width="11" height="31" fill="#cc0000"/>
<rect x="773" y="421" width="11" height="25" fill="#6aae24"/>
<rect x="791" y="393" width="11" height="27" fill="#cc0000"/>
<rect x="791" y="420" width="11" height="26" fill="#6aae24"/>
<rect x="809" y="396" width="11" height="31" fill="#cc0000"/>
<rect x="809" y="427" width="11" height="19" fill="#6aae24"/>
<rect x="827" y="402" width="11" height="25" fill="#cc0000"/>
<rect x="827" y="427" width="11" height="19" fill="#6aae24"/>
<rect x="845" y="399" width="11" height="25" fill="#cc0000"/>
<rect x="845" y="424" width="11" height="22" fill="#6aae24"/>
<rect x="863" y="399" width="11" height="28" fill="#cc0000"/>
<rect x="863" y="427" width="11" height="19" fill="#6aae24"/>
<rect x="881" y="399" width="11" height="26" fill="#cc0000"/>
<rect x="881" y="425" width="11" height="21" fill="#6aae24"/>
<rect x="899" y="405" width="11" height="22" fill="#cc0000"/>
<rect x="899" y="427" width="11" height="19" fill="#6aae24"/>
<rect x="359" y="598" width="11" height="17" fill="#a6de32"/>
<rect x="359" y="615" width="11" height="39" fill="#f8d92a"/>
<rect x="377" y="586" width="11" height="16" fill="#a6de32"/>
<rect x="377" y="602" width="11" height="52" fill="#f8d92a"/>
<rect x="395" y="613" width="11" height="17" fill="#a6de32"/>
<rect x="395" y="630" width="11" height="24" fill="#f8d92a"/>
<rect x="413" y="590" width="11" height="25" fill="#a6de32"/>
<rect x="413" y="615" width="11" height="39" fill="#f8d92a"/>
<rect x="431" y="593" width="11" height="19" fill="#a6de32"/>
<rect x="431" y="612" width="11" height="42" fill="#f8d92a"/>
<rect x="449" y="647" width="11" height="7" fill="#a6de32"/>
<rect x="467" y="575" width="11" height="20" fill="#a6de32"/>
<rect x="467" y="595" width="11" height="59" fill="#f8d92a"/>
<rect x="485" y="613" width="11" height="20" fill="#a6de32"/>
<rect x="485" y="633" width="11" height="21" fill="#f8d92a"/>
<rect x="503" y="615" width="11" height="17" fill="#a6de32"/>
<rect x="503" y="632" width="11" height="22" fill="#f8d92a"/>
<rect x="521" y="638" width="11" height="14" fill="#a6de32"/>
<rect x="521" y="652" width="11" height="2" fill="#f8d92a"/>
<rect x="539" y="527" width="11" height="23" fill="#a6de32"/>
<rect x="539" y="550" width="11" height="104" fill="#f8d92a"/>
<rect x="557" y="581" width="11" height="20" fill="#a6de32"/>
<rect x="557" y="601" width="11" height="53" fill="#f8d92a"/>
<rect x="575" y="559" width="11" height="20" fill="#a6de32"/>
<rect x="575" y="579" width="11" height="75" fill="#f8d92a"/>
<rect x="593" y="515" width="11" height="21" fill="#a6de32"/>
<rect x="593" y="536" width="11" height="118" fill="#f8d92a"/>
<rect x="611" y="598" width="11" height="19" fill="#a6de32"/>
<rect x="611" y="617" width="11" height="37" fill="#f8d92a"/>
<rect x="629" y="613" width="11" height="18" fill="#a6de32"/>
<rect x="629" y="631" width="11" height="23" fill="#f8d92a"/>
<rect x="647" y="593" width="11" height="21" fill="#a6de32"/>
<rect x="647" y="614" width="11" height="40" fill="#f8d92a"/>
<rect x="665" y="639" width="11" height="15" fill="#a6de32"/>
<rect x="683" y="544" width="11" height="21" fill="#a6de32"/>
<rect x="683" y="565" width="11" height="89" fill="#f8d92a"/>
<rect x="701" y="547" width="11" height="22" fill="#a6de32"/>
<rect x="701" y="569" width="11" height="85" fill="#f8d92a"/>
<rect x="719" y="498" width="11" height="25" fill="#a6de32"/>
<rect x="719" y="523" width="11" height="131" fill="#f8d92a"/>
<rect x="737" y="523" width="11" height="27" fill="#a6de32"/>
<rect x="737" y="550" width="11" height="104" fill="#f8d92a"/>
<rect x="755" y="501" width="11" height="19" fill="#a6de32"/>
<rect x="755" y="520" width="11" height="134" fill="#f8d92a"/>
<rect x="773" y="532" width="11" height="26" fill="#a6de32"/>
<rect x="773" y="558" width="11" height="96" fill="#f8d92a"/>
<rect x="791" y="510" width="11" height="27" fill="#a6de32"/>
<rect x="791" y="537" width="11" height="117" fill="#f8d92a"/>
<rect x="809" y="504" width="11" height="20" fill="#a6de32"/>
<rect x="809" y="524" width="11" height="130" fill="#f8d92a"/>
<rect x="827" y="506" width="11" height="20" fill="#a6de32"/>
<rect x="827" y="526" width="11" height="128" fill="#f8d92a"/>
<rect x="845" y="507" width="11" height="23" fill="#a6de32"/>
<rect x="845" y="530" width="11" height="124" fill="#f8d92a"/>
<rect x="863" y="489" width="11" height="20" fill="#a6de32"/>
<rect x="863" y="509" width="11" height="145" fill="#f8d92a"/>
<rect x="881" y="520" width="11" height="22" fill="#a6de32"/>
<rect x="881" y="542" width="11" height="112" fill="#f8d92a"/>
<rect x="899" y="489" width="11" height="19" fill="#a6de32"/>
<rect x="899" y="508" width="11" height="146" fill="#f8d92a"/>
<rect x="665" y="653" width="11" height="1" fill="#5a5a4a"/>
<text transform="translate(369,469) rotate(-90)" font-size="11" fill="#222">1</text>
<text transform="translate(387,469) rotate(-90)" font-size="11" fill="#222">2</text>
<text transform="translate(405,469) rotate(-90)" font-size="11" fill="#222">3</text>
<text transform="translate(423,469) rotate(-90)" font-size="11" fill="#222">4</text>
<text transform="translate(441,469) rotate(-90)" font-size="11" fill="#222">5</text>
<text transform="translate(459,469) rotate(-90)" font-size="11" fill="#222">6</text>
<text transform="translate(477,469) rotate(-90)" font-size="11" fill="#222">7</text>
<text transform="translate(495,469) rotate(-90)" font-size="11" fill="#222">8</text>
<text transform="translate(513,469) rotate(-90)" font-size="11" fill="#222">9</text>
<text transform="translate(531,469) rotate(-90)" font-size="11" fill="#222">10</text>
<text transform="translate(549,469) rotate(-90)" font-size="11" fill="#222">11</text>
<text transform="translate(567,469) rotate(-90)" font-size="11" fill="#222">12</text>
<text transform="translate(585,469) rotate(-90)" font-size="11" fill="#222">13</text>
<text transform="translate(603,469) rotate(-90)" font-size="11" fill="#222">14</text>
<text transform="translate(621,469) rotate(-90)" font-size="11" fill="#222">15</text>
<text transform="translate(639,469) rotate(-90)" font-size="11" fill="#222">16</text>
<text transform="translate(657,469) rotate(-90)" font-size="11" fill="#222">17</text>
<text transform="translate(675,469) rotate(-90)" font-size="11" fill="#222">18</text>
<text transform="translate(693,469) rotate(-90)" font-size="11" fill="#222">19</text>
<text transform="translate(711,469) rotate(-90)" font-size="11" fill="#222">20</text>
<text transform="translate(729,469) rotate(-90)" font-size="11" fill="#222">21</text>
<text transform="translate(747,469) rotate(-90)" font-size="11" fill="#222">22</text>
<text transform="translate(765,469) rotate(-90)" font-size="11" fill="#222">23</text>
<text transform="translate(783,469) rotate(-90)" font-size="11" fill="#222">24</text>
<text transform="translate(801,469) rotate(-90)" font-size="11" fill="#222">25</text>
<text transform="translate(819,469) rotate(-90)" font-size="11" fill="#222">26</text>
<text transform="translate(837,469) rotate(-90)" font-size="11" fill="#222">27</text>
<text transform="translate(855,469) rotate(-90)" font-size="11" fill="#222">28</text>
<text transform="translate(873,469) rotate(-90)" font-size="11" fill="#222">29</text>
<text transform="translate(891,469) rotate(-90)" font-size="11" fill="#222">30</text>
<text transform="translate(909,469) rotate(-90)" font-size="11" fill="#222">31</text>
<text transform="translate(314,464) rotate(-90)" font-size="11" text-anchor="middle" fill="#333">Energie [kWh]</text>
<text x="612.5" y="260" font-size="13.5" text-anchor="middle" fill="#8e8e8e" stroke="#8e8e8e" stroke-width="0.35" textLength="67.5" lengthAdjust="spacing">Verbrauch</text>
<text x="612.5" y="673" font-size="13.5" text-anchor="middle" fill="#8e8e8e" stroke="#8e8e8e" stroke-width="0.35" textLength="67.6" lengthAdjust="spacing">Erzeugung</text>
<rect x="303.5" y="691.5" width="634" height="32" fill="#ececec" stroke="#c8c8c8" stroke-width="1"/>
<polygon points="308,696 322,696 308,710" fill="#cc0000"/><polygon points="322,696 322,710 308,710" fill="#6aae24"/>
<text x="328.6" y="705" font-size="11" fill="#222" textLength="82.7" lengthAdjust="spacing">Monatsverbrauch</text>
<text x="328.6" y="721" font-size="11.5" font-weight="bold" fill="#6a6a6a" textLength="66.2" lengthAdjust="spacing">223,29 kWh</text>
<rect x="421" y="696" width="14" height="14" fill="#cc0000"/>
<text x="440.5" y="705" font-size="11" fill="#222" textLength="50.5" lengthAdjust="spacing">Netzbezug</text>
<text x="440.5" y="721" font-size="11.5" font-weight="bold" fill="#6a6a6a" textLength="66.4" lengthAdjust="spacing">139,28 kWh</text>
<rect x="520" y="696" width="14" height="14" fill="#6aae24"/>
<text x="539.7" y="705" font-size="11" fill="#222" textLength="80.6" lengthAdjust="spacing">Eigenversorgung</text>
<text x="539.7" y="721" font-size="11.5" font-weight="bold" fill="#6a6a6a" textLength="59.3" lengthAdjust="spacing">84,01 kWh</text>
<polygon points="630,696 644,696 630,710" fill="#a6de32"/><polygon points="644,696 644,710 630,710" fill="#ffd400"/>
<text x="650.1" y="705" font-size="11" fill="#222" textLength="63.4" lengthAdjust="spacing">Monatsertrag</text>
<text x="650.1" y="721" font-size="11.5" font-weight="bold" fill="#6a6a6a" textLength="66.0" lengthAdjust="spacing">411,47 kWh</text>
<rect x="729" y="696" width="14" height="14" fill="#a6de32"/>
<text x="749.3" y="705" font-size="11" fill="#222" textLength="74.4" lengthAdjust="spacing">Eigenverbrauch</text>
<text x="749.3" y="721" font-size="11.5" font-weight="bold" fill="#6a6a6a" textLength="58.8" lengthAdjust="spacing">84,01 kWh</text>
<rect x="833" y="696" width="14" height="14" fill="#f8d92a"/>
<text x="853.4" y="705" font-size="11" fill="#222" textLength="77.9" lengthAdjust="spacing">Netzeinspeisung</text>
<text x="853.4" y="721" font-size="11.5" font-weight="bold" fill="#6a6a6a" textLength="65.9" lengthAdjust="spacing">327,46 kWh</text>
</svg>

<!-- date nav -->
<div class="abs" style="left:546px;top:745px;width:19px;height:15px;border:1px solid #9a9a9a;border-radius:5px;background:linear-gradient(#fff,#e8e8e8);box-shadow:1px 1px 1px #ccc"></div>
<svg class="abs" style="left:552px;top:749px" width="6" height="8"><path d="M5 0 L0 4 L5 8 Z" fill="#0b5cb5"/></svg>
<div class="abs" style="left:570px;top:743px;width:104px;height:18px;border:1px solid #8a8a8a;background:#fff"></div>
<div class="abs" style="left:573px;top:745px;font-size:10.7px;color:#111;line-height:14px">März 2020</div>
<div class="abs" style="left:654px;top:744px;width:19px;height:16px;background:#eeeeee;border-left:1px solid #ddd;border-right:2px solid #999;border-bottom:2px solid #999"></div>
<svg class="abs" style="left:659px;top:749px" width="9" height="6"><path d="M0.5 0.5 L4.5 4.5 L8.5 0.5" fill="none" stroke="#111" stroke-width="1.4"/></svg>
<div class="abs" style="left:678px;top:745px;width:19px;height:15px;border:1px solid #9a9a9a;border-radius:5px;background:linear-gradient(#fff,#e8e8e8);box-shadow:1px 1px 1px #ccc"></div>
<svg class="abs" style="left:685px;top:749px" width="6" height="8"><path d="M0 0 L5 4 L0 8 Z" fill="#0b5cb5"/></svg>
<!-- gear small -->
<svg class="abs" style="left:935px;top:742px" width="18" height="18" viewBox="0 0 18 18"><path d="M13.15 7.69 L15.23 7.99 L15.23 10.01 L13.15 10.31 L12.47 11.93 L13.74 13.61 L12.31 15.04 L10.63 13.77 L9.01 14.45 L8.71 16.53 L6.69 16.53 L6.39 14.45 L4.77 13.77 L3.09 15.04 L1.66 13.61 L2.93 11.93 L2.25 10.31 L0.17 10.01 L0.17 7.99 L2.25 7.69 L2.93 6.07 L1.66 4.39 L3.09 2.96 L4.77 4.23 L6.39 3.55 L6.69 1.47 L8.71 1.47 L9.01 3.55 L10.63 4.23 L12.31 2.96 L13.74 4.39 L12.47 6.07 Z" fill="#e8e8e8" stroke="#a0a0a0" stroke-width="0.9" stroke-linejoin="round"/><circle cx="7.7" cy="9" r="2.3" fill="#fff" stroke="#a0a0a0" stroke-width="0.9"/><path d="M9.2 6.2 L13 1 L17 6.2 Z" fill="#0a62c8"/></svg>

<!-- Bilanz panel -->
<div class="abs" style="left:292px;top:775px;width:660px;height:180px;border:1px solid #c4c4c4;border-radius:9px 9px 0 0;background:#fff;overflow:hidden">
  <div style="position:absolute;left:0;top:0;width:100%;height:29px;background:linear-gradient(#fbfbfb,#e2e2e2);border-bottom:1px solid #c4c4c4"></div>
  <div style="position:absolute;left:0;bottom:0;width:100%;height:3px;background:#e4e4e4;border-top:1px solid #c8c8c8"></div>
</div>
<svg class="abs" style="left:302px;top:788px" width="8" height="5"><path d="M0 0 H7 L3.5 4.5 Z" fill="#666"/></svg>
<div class="abs" style="left:312px;top:783px;font-size:11.5px;font-weight:bold;color:#666;line-height:14px">Bilanz</div>
<svg style="position:absolute;left:314px;top:824px" width="14" height="14"><polygon points="0,0 14,0 0,14" fill="#cc0000"/><polygon points="14,0 14,14 0,14" fill="#6aae24"/></svg>
<div class="bt" style="left:335px;top:825px">Monatsverbrauch</div>
<div class="bv" style="left:449px;top:825px">223,29 kWh</div>
<div style="position:absolute;left:314px;top:850px;width:14px;height:14px;background:#cc0000"></div>
<div class="bt" style="left:335px;top:851px">Netzbezug</div>
<div class="bv" style="left:449px;top:851px">139,28 kWh</div>
<div style="position:absolute;left:314px;top:876px;width:14px;height:14px;background:#6aae24"></div>
<div class="bt" style="left:335px;top:877px">Eigenversorgung</div>
<div class="bv" style="left:449px;top:877px">84,01 kWh</div>
<div style="position:absolute;left:311px;top:844px;width:291px;height:1px;background:#c8c8c8"></div>
<div style="position:absolute;left:311px;top:870px;width:291px;height:1px;background:#c8c8c8"></div>
<div style="position:absolute;left:311px;top:902px;width:291px;height:2px;background:#bdbdbd"></div>
<div class="bt" style="left:335px;top:915px">Autarkiequote</div>
<div class="bv" style="left:449px;top:915px">38 %</div>
<svg style="position:absolute;left:645px;top:824px" width="14" height="14"><polygon points="0,0 14,0 0,14" fill="#a6de32"/><polygon points="14,0 14,14 0,14" fill="#ffd400"/></svg>
<div class="bt" style="left:666px;top:825px">Monatsertrag</div>
<div class="bv" style="left:780px;top:825px">411,47 kWh</div>
<div style="position:absolute;left:645px;top:850px;width:14px;height:14px;background:#a6de32"></div>
<div class="bt" style="left:666px;top:851px">Eigenverbrauch</div>
<div class="bv" style="left:780px;top:851px">84,01 kWh</div>
<div style="position:absolute;left:645px;top:876px;width:14px;height:14px;background:#f8d92a"></div>
<div class="bt" style="left:666px;top:877px">Netzeinspeisung</div>
<div class="bv" style="left:780px;top:877px">327,46 kWh</div>
<div style="position:absolute;left:642px;top:844px;width:291px;height:1px;background:#c8c8c8"></div>
<div style="position:absolute;left:642px;top:870px;width:291px;height:1px;background:#c8c8c8"></div>
<div style="position:absolute;left:642px;top:902px;width:291px;height:2px;background:#bdbdbd"></div>
<div class="bt" style="left:666px;top:915px">Eigenverbrauchsquote</div>
<div class="bv" style="left:780px;top:915px">20 %</div>

<!-- footer -->
<div class="abs" style="left:0;top:1015px;width:1920px;height:65px;background:linear-gradient(#ebebeb 0,#f6f6f6 16px,#fff 28px,#fff 100%);border-top:1px solid #c2c2c2;border-bottom:1px solid #e8e8e8"></div>
<div class="ft" style="left:10px">© 2020 SMA Solar Technology AG</div>
<div class="ft" style="left:188px">|</div>
<div class="ft" style="left:201.5px">Startseite</div>
<div class="ft" style="left:258.5px">|</div>
<div class="ft" style="left:272px">Information</div>
<div class="ft" style="left:340px">|</div>
<div class="ft" style="left:353.75px">Bedienungsanleitungen</div>
<div class="ft" style="left:477.5px">|</div>
<div class="ft" style="left:491px">FAQ</div>
<div class="ft" style="left:523px">|</div>
<div class="ft" style="left:536px">Nutzungsbedingungen</div>
<div class="ft" style="left:656px">|</div>
<div class="ft" style="left:669.5px">Datenschutzerklärung</div>
<div class="ft" style="left:786px">|</div>
<div class="ft" style="left:799.5px">Impressum</div>
</body></html>
